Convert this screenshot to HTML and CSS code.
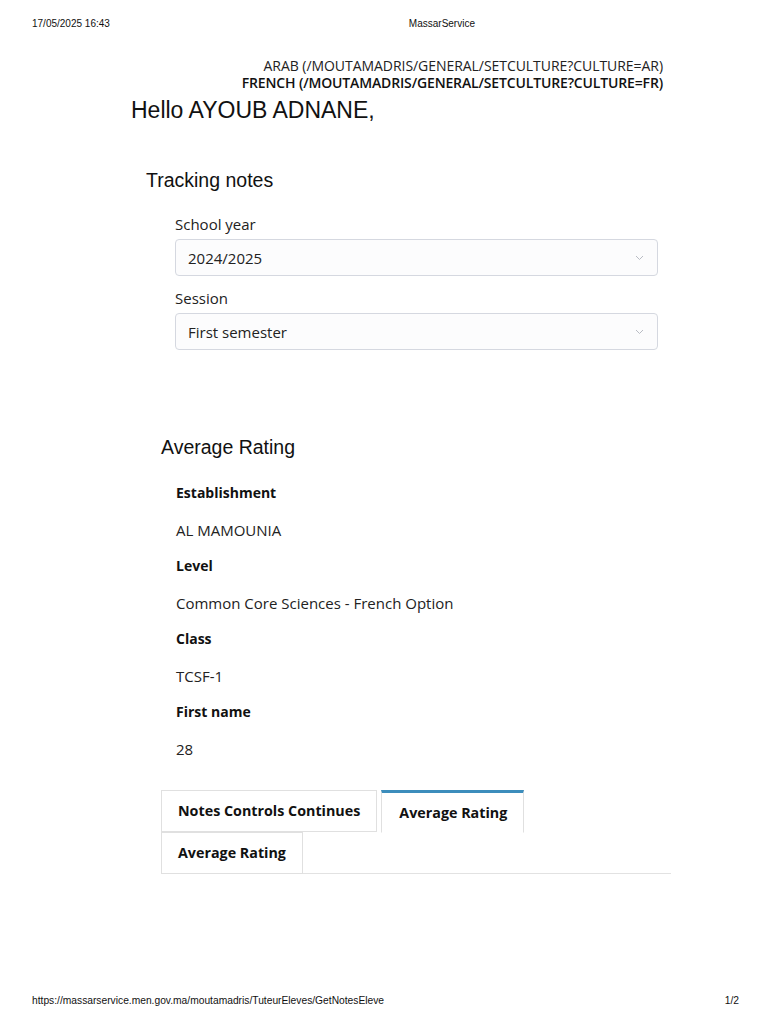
FILE: index.html
```html
<!DOCTYPE html>
<html lang="en">
<head>
<meta charset="utf-8">
<title>MassarService</title>
<link rel="stylesheet" href="styles.css">
</head>
<body>
<div class="page">
  <header class="print-head">
    <span class="print-date">17/05/2025 16:43</span>
    <span class="print-title">MassarService</span>
  </header>

  <main class="content">
    <div class="culture">
      <div class="culture-link">ARAB (/MOUTAMADRIS/GENERAL/SETCULTURE?CULTURE=AR)</div>
      <div class="culture-link strong">FRENCH (/MOUTAMADRIS/GENERAL/SETCULTURE?CULTURE=FR)</div>
    </div>
    <h1 class="hello">Hello AYOUB ADNANE,</h1>

    <section class="tracking">
      <h2 class="section-title">Tracking notes</h2>
      <div class="form">
        <label class="field-label">School year</label>
        <div class="select">
          <span>2024/2025</span>
          <svg class="chev" width="9" height="6" viewBox="0 0 9 6"><path d="M1 1l3.5 3.5L8 1" fill="none" stroke="#b9bcc4" stroke-width="1"/></svg>
        </div>
        <label class="field-label gap">Session</label>
        <div class="select">
          <span>First semester</span>
          <svg class="chev" width="9" height="6" viewBox="0 0 9 6"><path d="M1 1l3.5 3.5L8 1" fill="none" stroke="#b9bcc4" stroke-width="1"/></svg>
        </div>
      </div>
    </section>

    <section class="rating">
      <h2 class="section-title">Average Rating</h2>
      <dl class="info">
        <dt>Establishment</dt>
        <dd>AL MAMOUNIA</dd>
        <dt>Level</dt>
        <dd>Common Core Sciences - French Option</dd>
        <dt>Class</dt>
        <dd>TCSF-1</dd>
        <dt>First name</dt>
        <dd>28</dd>
      </dl>

      <ul class="tabs">
        <li class="tab tab-first">Notes Controls Continues</li>
        <li class="tab active">Average Rating</li>
        <li class="tab-break" aria-hidden="true"></li>
        <li class="tab tab-third">Average Rating</li>
      </ul>
    </section>
  </main>

  <footer class="print-foot">
    <span>https://massarservice.men.gov.ma/moutamadris/TuteurEleves/GetNotesEleve</span>
    <span>1/2</span>
  </footer>
</div>
</body>
</html>
```

FILE: styles.css
```css
* { box-sizing: border-box; }
html, body { margin: 0; padding: 0; background: #fff; }
body { font-family: "Open Sans", "Liberation Sans", sans-serif; color: #222; }

.page {
  width: 768px;
  min-height: 1024px;
  display: flex;
  flex-direction: column;
}

.print-head {
  display: flex;
  padding: 18px 32px 0 32px;
  font-family: "Liberation Sans", Arial, sans-serif;
  font-size: 10px;
  line-height: 12px;
  color: #111;
}
.print-title { margin-left: 299px; }

.content {
  width: 540px;
  margin-left: 131px;
}

.culture {
  margin-top: 27px;
  text-align: right;
  padding-right: 8px;
  font-size: 14px;
  line-height: 17px;
  color: #222;
}
.culture-link { letter-spacing: -0.05px; }
.culture-link.strong { font-weight: 600; color: #111; letter-spacing: -0.15px; }

.hello {
  margin: 5px 0 0 0;
  font-family: "Liberation Sans", Arial, sans-serif;
  font-weight: normal;
  font-size: 23px;
  line-height: 28px;
  color: #111;
}

.section-title {
  margin: 0;
  font-family: "Liberation Sans", Arial, sans-serif;
  font-weight: normal;
  font-size: 19.5px;
  line-height: 22px;
  color: #111;
}

.tracking { margin-top: 45px; padding-left: 15px; }

.form {
  margin-top: 23px;
  padding-left: 29px;
  width: 512px;
  display: flex;
  flex-direction: column;
}
.field-label {
  font-size: 15px;
  line-height: 20px;
  color: #222;
  margin-bottom: 5px;
}
.field-label.gap { margin-top: 12px; }

.select {
  height: 37px;
  border: 1px solid #d5d8e0;
  border-radius: 4px;
  background: #fcfcfd;
  display: flex;
  align-items: center;
  justify-content: space-between;
  padding: 0 13px 0 12px;
  font-size: 15px;
  color: #222;
}
.chev { display: block; }

.rating { margin-top: 86px; padding-left: 30px; }

.info {
  margin: 25px 0 0 0;
  padding-left: 15px;
  display: grid;
  row-gap: 16px;
  line-height: 20px;
}
.info dt { font-size: 14px; font-weight: 700; color: #111; margin-bottom: 1px; }
.info dd { font-size: 15px; margin: 0; color: #222; }

.tabs {
  list-style: none;
  margin: 31px 0 0 0;
  padding: 0;
  display: flex;
  flex-wrap: wrap;
  align-items: flex-start;
  border-bottom: 1px solid #e2e2e2;
}
.tab {
  font-size: 14.3px;
  font-weight: 700;
  color: #111;
  line-height: 20px;
  padding: 10px 16px 10px 16px;
  border: 1px solid #e0e0e0;
  margin-bottom: -1px;
  background: #fff;
}
.tab-first { margin-right: 4px; }
.tab.active {
  border-top: 3px solid #3c8dbc;
  border-bottom: 1px solid #fff;
  padding-top: 10px;
  padding-bottom: 9px;
  padding-left: 17px;
  padding-right: 16px;
}
.tab-break { flex-basis: 100%; height: 0; }

.print-foot {
  margin-top: auto;
  display: flex;
  justify-content: space-between;
  padding: 0 29px 17px 32px;
  font-family: "Liberation Sans", Arial, sans-serif;
  font-size: 10.25px;
  line-height: 12px;
  color: #111;
}
```
